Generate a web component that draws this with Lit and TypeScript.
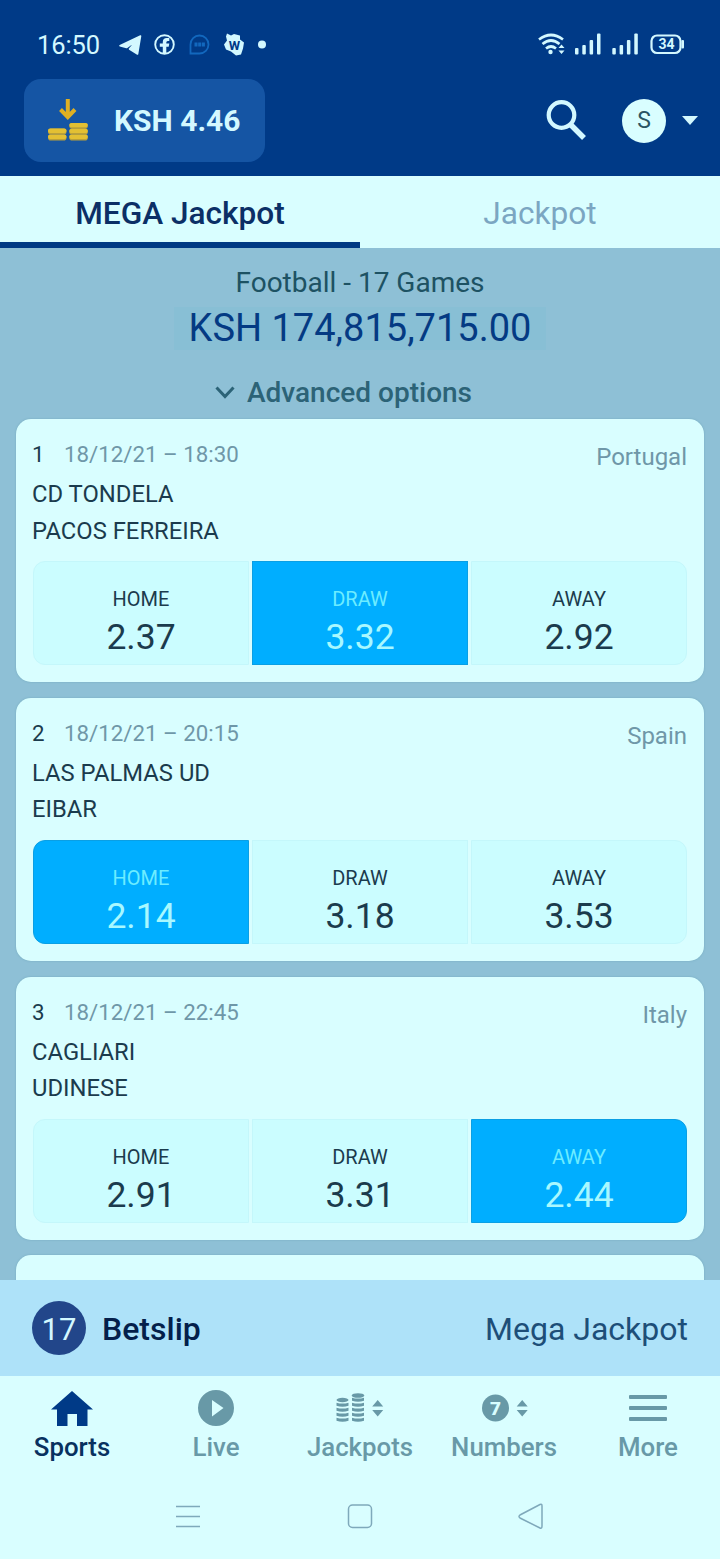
import { LitElement, html, css, svg, nothing } from "lit";
import { customElement, property } from "lit/decorators.js";
import { classMap } from "lit/directives/class-map.js";

interface Match {
  no: number;
  date: string;
  country: string;
  teams: [string, string];
  odds: [string, string, string];
  pick: number;
}

const MATCHES: Match[] = [
  { no: 1, date: "18/12/21 – 18:30", country: "Portugal", teams: ["CD TONDELA", "PACOS FERREIRA"], odds: ["2.37", "3.32", "2.92"], pick: 1 },
  { no: 2, date: "18/12/21 – 20:15", country: "Spain", teams: ["LAS PALMAS UD", "EIBAR"], odds: ["2.14", "3.18", "3.53"], pick: 0 },
  { no: 3, date: "18/12/21 – 22:45", country: "Italy", teams: ["CAGLIARI", "UDINESE"], odds: ["2.91", "3.31", "2.44"], pick: 2 },
];

const OUTCOMES = ["HOME", "DRAW", "AWAY"];

@customElement("match-card")
export class MatchCard extends LitElement {
  @property({ attribute: false }) match!: Match;

  static styles = css`
    :host {
      display: block;
      box-sizing: border-box;
      height: 263px;
      padding: 17px 17px 0 17px;
      border-radius: 15px;
      background: #d9feff;
      box-shadow: 0 0 2px rgba(60, 120, 140, 0.35);
      color: #1b3b4d;
    }
    .meta {
      display: flex;
      height: 40px;
      font-size: 22.3px;
      color: #6f97a8;
    }
    .no {
      width: 32px;
      margin-left: -1px;
      color: #1b3b4d;
      line-height: 37px;
    }
    .date {
      flex: 1;
      line-height: 37px;
    }
    .country {
      font-size: 24px;
      line-height: 43px;
    }
    .team {
      height: 36.5px;
      line-height: 37px;
      font-size: 23.8px;
      margin-left: -1px;
      white-space: nowrap;
    }
    .odds {
      display: grid;
      grid-template-columns: 216px 216px 216px;
      gap: 3px;
      margin-top: 12px;
      height: 104px;
    }
    .odd {
      display: flex;
      flex-direction: column;
      align-items: center;
      box-sizing: border-box;
      padding-top: 23px;
      background: #cbfdff;
      border: 1px solid #c4f7fb;
    }
    .odd:first-child {
      border-radius: 12px 0 0 12px;
    }
    .odd:last-child {
      border-radius: 0 12px 12px 0;
    }
    .picked {
      background: #00aeff;
      border-color: #0a9fe4;
      color: #a8f8ff;
    }
    .name {
      height: 28px;
      line-height: 28px;
      font-size: 20px;
    }
    .picked .name {
      color: #6cecff;
    }
    .value {
      height: 48px;
      line-height: 48px;
      font-size: 35.5px;
    }
  `;

  render() {
    const m = this.match;
    if (!m) return nothing;
    return html`
      <div class="meta">
        <span class="no">${m.no}</span>
        <span class="date">${m.date}</span>
        <span class="country">${m.country}</span>
      </div>
      ${m.teams.map((t) => html`<div class="team">${t}</div>`)}
      <div class="odds">
        ${m.odds.map(
          (o, i) => html`<div class=${classMap({ odd: true, picked: i === m.pick })}>
            <span class="name">${OUTCOMES[i]}</span>
            <span class="value">${o}</span>
          </div>`
        )}
      </div>
    `;
  }
}

const sorter = svg`<path d="M0 -1.500L5.500 -8L11 -1.500ZM0 2L5.500 8.500L11 2Z"/>`;

@customElement("app-root")
export class AppRoot extends LitElement {
  static styles = css`
    :host {
      display: flex;
      flex-direction: column;
      width: 720px;
      height: 1559px;
      overflow: hidden;
      background: #d9feff;
      font-family: Roboto, "Liberation Sans", sans-serif;
    }
    svg {
      display: block;
    }
    .header {
      height: 176px;
      background: #003a87;
      color: #d3f8ff;
      flex: none;
    }
    .status {
      display: flex;
      align-items: center;
      height: 79px;
      box-sizing: border-box;
      padding: 10px 35px 0 37px;
    }
    .clock {
      width: 81px;
      font-size: 25.5px;
      line-height: 30px;
      letter-spacing: -0.1px;
    }
    .spacer {
      flex: 1;
    }
    .account {
      display: flex;
      align-items: center;
      height: 83px;
      padding: 0 22px 0 24px;
    }
    .balance {
      display: flex;
      align-items: center;
      box-sizing: border-box;
      width: 241px;
      height: 83px;
      padding-left: 22px;
      border-radius: 17px;
      background: #1555a4;
      font-size: 30px;
      font-weight: 700;
      gap: 26px;
      white-space: nowrap;
    }
    .avatar {
      width: 44px;
      height: 44px;
      border-radius: 50%;
      background: #d9feff;
      color: #2b5564;
      font-size: 23px;
      line-height: 43px;
      text-align: center;
      margin: 0 16px 0 35px;
    }
    .tabs {
      display: grid;
      grid-template-columns: 1fr 1fr;
      height: 72px;
      flex: none;
    }
    .tab {
      box-sizing: border-box;
      height: 72px;
      line-height: 75px;
      text-align: center;
      font-size: 31.6px;
      color: #7ba6c2;
    }
    .tab.active {
      border-bottom: 6px solid #003a84;
      color: #0b2f66;
      font-weight: 500;
    }
    .content {
      flex: none;
      height: 1032px;
      overflow: hidden;
      background: #8ec0d6;
    }
    .summary {
      display: flex;
      flex-direction: column;
      align-items: center;
      height: 171px;
      box-sizing: border-box;
      padding-top: 17px;
    }
    .games {
      height: 36px;
      line-height: 36px;
      font-size: 28px;
      color: #1d5263;
    }
    .prize {
      box-sizing: border-box;
      width: 372px;
      height: 43px;
      margin: 6px 0 1px;
      line-height: 43px;
      text-align: center;
      font-size: 38px;
      color: #043a83;
      background: #88bfd5;
      white-space: nowrap;
    }
    .advanced {
      display: flex;
      align-items: center;
      gap: 12px;
      height: 40px;
      margin-top: 21px;
      margin-right: 33px;
      font-size: 28px;
      font-weight: 500;
      color: #2c6377;
    }
    .list {
      display: flex;
      flex-direction: column;
      gap: 15.8px;
      padding: 0 16px;
    }
    .betslip {
      display: flex;
      align-items: center;
      box-sizing: border-box;
      flex: none;
      height: 96px;
      padding: 0 32px;
      background: #aee2f9;
      font-size: 32px;
    }
    .count {
      width: 54px;
      height: 54px;
      border-radius: 50%;
      background: #22468a;
      color: #d3f8ff;
      font-size: 31px;
      line-height: 57px;
      text-align: center;
    }
    .slip {
      flex: 1;
      margin: 2px 0 0 16px;
      font-weight: 500;
      color: #041f4b;
    }
    .kind {
      margin-top: 2px;
      color: #1d4e78;
    }
    .nav {
      display: grid;
      grid-template-columns: repeat(5, 144px);
      height: 99px;
      flex: none;
    }
    .item {
      display: flex;
      flex-direction: column;
      align-items: center;
      padding-top: 10px;
      font-size: 25.8px;
      font-weight: 500;
      color: #6899a7;
      line-height: 34px;
    }
    .item svg {
      fill: currentColor;
      margin-bottom: 4px;
    }
    .item.active {
      color: #08315f;
    }
    .system {
      flex: 1;
    }
  `;

  private statusIcons() {
    return html`<svg width="150" height="30" viewBox="118 29.500 150 30" fill="#d3f8ff">
      <path d="M140.500 35.500L120 45.200L126.500 47L137 39.500L129.500 48.500L137.500 53.500Z" stroke="#d3f8ff" stroke-width="1.600" stroke-linejoin="round" />
      <circle cx="164.500" cy="44" r="9.300" fill="none" stroke="#d3f8ff" stroke-width="1.900" />
      <path d="M162.800 53V46.300H159.800V43H162.800V41.500Q162.800 37.500 166.800 37.500H169.300V40.500H167.800Q166.300 40.500 166.300 42V43H169.300L168.700 46.300H166.300V53Z" />
      <path d="M190.500 53V44A9 9 0 1 1 199.500 53Z" fill="none" stroke="#1268be" stroke-width="1.800" />
      <path d="M194.500 44H205" stroke="#1268be" stroke-width="4" stroke-dasharray="3 0.700" />
      <path d="M227 33L231 35L234 33.500L240 35V39L244 42L243 48L241 54L236 55L231 51L226 49L224 44L227 40L226 36Z" />
      <text x="234.500" y="49" font-size="13" font-weight="700" fill="#003a87" text-anchor="middle">W</text>
      <circle cx="262" cy="44" r="4" />
    </svg>`;
  }

  private signalIcons() {
    const bars = (x: number) => svg`
      <rect x=${x} y="48" width="3.500" height="6.500" rx="1" />
      <rect x=${x + 7.3} y="45" width="3.500" height="9.500" rx="1" />
      <rect x=${x + 14.6} y="40" width="3.500" height="14.500" rx="1" />
      <rect x=${x + 22} y="33.500" width="3.500" height="21" rx="1" />`;
    return html`<svg width="148" height="30" viewBox="537 30 148 30" fill="#d3f8ff">
      <g fill="none" stroke="#d3f8ff" stroke-width="2.700">
        <path d="M539 39.500Q551 30.500 563 39.500" />
        <path d="M542.500 44Q551 37 559.500 44" />
        <path d="M546 48.500Q551 44.500 556 48.500" />
      </g>
      <circle cx="550.500" cy="52" r="2.200" />
      <path d="M558.500 48L561.500 44.500L564.500 48ZM558.500 50.500L561.500 54L564.500 50.500Z" />
      ${bars(575)}${bars(612.3)}
      <rect x="651.500" y="35.500" width="29" height="17.500" rx="5.500" fill="none" stroke="#d3f8ff" stroke-width="2.200" />
      <rect x="681.500" y="40" width="2.500" height="8.500" rx="1" />
      <text x="666.500" y="49.300" font-size="14" font-weight="700" text-anchor="middle">34</text>
    </svg>`;
  }

  private depositIcon() {
    const coin = (x: number, y: number) =>
      svg`<rect x=${x} y=${y} width="18.500" height="6" rx="2.800" fill="#b9a03a"/><rect x=${x} y=${y} width="18.500" height="4.400" rx="2.200" fill="#e3c033"/>`;
    return html`<svg width="42" height="46" viewBox="46 98 42 46">
      <path d="M67.800 99V116M60.500 109.500L67.800 117L75 109.500" fill="none" stroke="#dfb022" stroke-width="4" />
      ${coin(48, 134.5)}${coin(48, 128.5)}
      ${coin(69.3, 134.5)}${coin(69.3, 128.7)}${coin(69.3, 122.9)}
    </svg>`;
  }

  private jackpotsIcon() {
    const stack = (x: number, count: number) =>
      Array.from({ length: count }, (_, i) => {
        const y = 33.6 - i * 5;
        return svg`<path d=${`M${x} ${y - 1.9}Q${x + 6} ${y - 0.1} ${x + 12} ${y - 1.9}V${y + 1.2}Q${x + 6} ${y + 3} ${x} ${y + 1.2}Z`}/>`;
      });
    return html`<svg width="50" height="40" viewBox="0 0 50 40">
      ${stack(1.5, 4)}${stack(17, 5)}
      <ellipse cx="7.500" cy="14" rx="6" ry="2.200" /><ellipse cx="23" cy="9.500" rx="6.200" ry="2.300" />
      <g transform="translate(37.200 22)">${sorter}</g>
    </svg>`;
  }

  render() {
    return html`
      <div class="header">
        <div class="status">
          <span class="clock">16:50</span>
          ${this.statusIcons()}
          <span class="spacer"></span>
          ${this.signalIcons()}
        </div>
        <div class="account">
          <div class="balance">${this.depositIcon()}<span>KSH 4.46</span></div>
          <span class="spacer"></span>
          <svg width="41" height="42" viewBox="0 0 41 42" fill="none" stroke="#d3f8ff">
            <circle cx="15.500" cy="15" r="12.800" stroke-width="4.200" />
            <path d="M24.500 24.500L38 38" stroke-width="5.500" />
          </svg>
          <span class="avatar">S</span>
          <svg width="16" height="10" viewBox="0 0 16 10"><path d="M0 0H16L8 9Z" fill="#d3f8ff" /></svg>
        </div>
      </div>

      <div class="tabs">
        <div class="tab active">MEGA Jackpot</div>
        <div class="tab">Jackpot</div>
      </div>

      <div class="content">
        <div class="summary">
          <div class="games">Football - 17 Games</div>
          <div class="prize">KSH 174,815,715.00</div>
          <div class="advanced">
            <svg width="20" height="14" viewBox="0 0 20 14" fill="none" stroke="#2c6377" stroke-width="3"><path d="M1.500 2.500L10 11.500L18.500 2.500" /></svg>
            <span>Advanced options</span>
          </div>
        </div>
        <div class="list">
          ${MATCHES.map((m) => html`<match-card .match=${m}></match-card>`)}
          <match-card></match-card>
        </div>
      </div>

      <div class="betslip">
        <span class="count">17</span>
        <span class="slip">Betslip</span>
        <span class="kind">Mega Jackpot</span>
      </div>

      <div class="nav">
        <div class="item active">
          <svg width="44" height="40" viewBox="0 0 44 40"><path d="M22 5L43 23.500H37.500V40H27V28H17.500V40H7V23.500H1Z" fill="#003a87" /></svg>
          <span>Sports</span>
        </div>
        <div class="item">
          <svg width="38" height="40" viewBox="0 0 38 40"><path fill-rule="evenodd" d="M19 4A18 18 0 1 0 19 40A18 18 0 1 0 19 4ZM15 14L26.500 22L15 30.500Z" /></svg>
          <span>Live</span>
        </div>
        <div class="item">
          ${this.jackpotsIcon()}
          <span>Jackpots</span>
        </div>
        <div class="item">
          <svg width="48" height="40" viewBox="0 0 48 40">
            <circle cx="15.500" cy="22" r="13.500" />
            <text x="15.500" y="29" font-size="19" font-weight="900" text-anchor="middle" fill="#d9feff">7</text>
            <g transform="translate(36.700 22)">${sorter}</g>
          </svg>
          <span>Numbers</span>
        </div>
        <div class="item">
          <svg width="40" height="40" viewBox="0 0 40 40"><rect x="1" y="9" width="38" height="4" rx="1" /><rect x="1" y="20" width="38" height="4" rx="1" /><rect x="1" y="31" width="38" height="4" rx="1" /></svg>
          <span>More</span>
        </div>
      </div>

      <div class="system">
        <svg width="720" height="84" viewBox="0 1475 720 84" fill="none" stroke="#7fa9bb" stroke-width="1.500">
          <path d="M176 1506.500H200M176 1516.500H200M176 1526.500H200" />
          <rect x="348.500" y="1505" width="23" height="22.500" rx="4" />
          <path d="M540 1504.500Q542 1503.500 542 1506V1526Q542 1529 540 1528L520 1518Q518 1516.500 520 1515Z" />
        </svg>
      </div>
    `;
  }
}
